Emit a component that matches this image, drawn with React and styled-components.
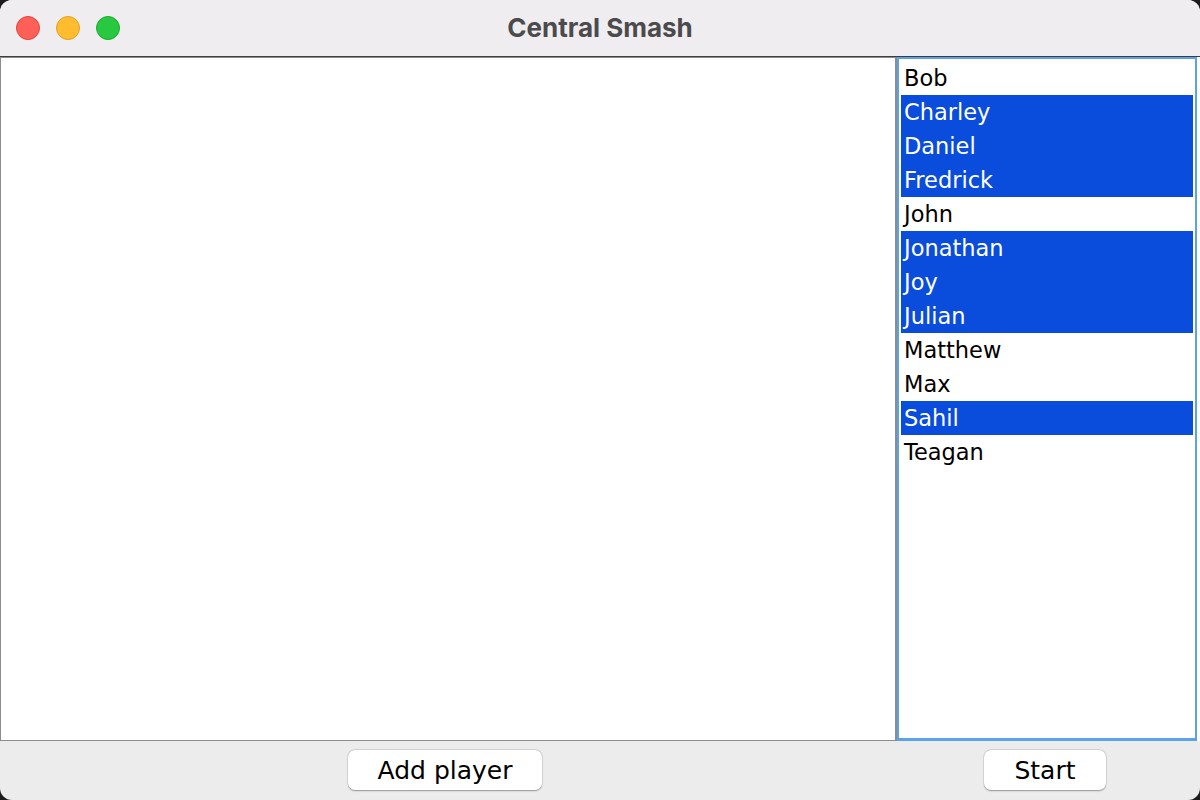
import React, { useState } from "react";
import styled, { createGlobalStyle } from "styled-components";

const GlobalStyle = createGlobalStyle`
	html, body {
		margin: 0;
		padding: 0;
		background: #1c1c1c;
	}
	#root {
		width: 1200px;
		height: 800px;
	}
`;

const Window = styled.div`
	width: 1200px;
	height: 800px;
	border-radius: 12px;
	overflow: hidden;
	background: #ececec;
	display: flex;
	flex-direction: column;
	font-family: "DejaVu Sans", "Liberation Sans", sans-serif;
`;

const TitleBar = styled.div`
	position: relative;
	height: 56px;
	flex: none;
	background: #efedf0;
	border-bottom: 1px solid #3d3d3d;
	display: flex;
	align-items: center;
	justify-content: center;

	h1 {
		margin: 0 0 2px 0;
		font-family: "Inter", "Liberation Sans", sans-serif;
		font-size: 26px;
		font-weight: 700;
		color: #4b4a4d;
	}
`;

const Lights = styled.div`
	position: absolute;
	left: 16px;
	top: 16px;
	display: flex;
	gap: 16px;
`;

const Light = styled.span`
	width: 24px;
	height: 24px;
	border-radius: 50%;
	background: ${p => p.color};
	border: 1px solid ${p => p.edge};
	box-sizing: border-box;
`;

const Main = styled.div`
	height: 684px;
	flex: none;
	display: grid;
	grid-template-columns: 897px 300px;
	background: #ffffff;
`;

const Canvas = styled.div`
	border: 1px solid #8c8c8c;
	border-right-width: 2px;
	background: #fff;
`;

const List = styled.ul`
	margin: 0;
	padding: 2px;
	list-style: none;
	border: 2px solid #5aa3e8;
	border-bottom-width: 3px;
	background: #fff;
	overflow: hidden;
`;

const Item = styled.li`
	height: 34px;
	line-height: 34px;
	padding-left: 3px;
	font-size: 22.5px;
	background: ${p => (p.selected ? "#0a4cdb" : "transparent")};
	color: ${p => (p.selected ? "#fff" : "#000")};
	white-space: nowrap;
`;

const BottomBar = styled.div`
	flex: 1;
	display: grid;
	grid-template-columns: 890px 310px;
	align-items: start;
	padding-top: 9px;
`;

const Button = styled.button`
	justify-self: center;
	height: 40px;
	padding: 0 30px;
	border: none;
	border-radius: 7px;
	background: #fff;
	box-shadow: 0 0.5px 1.5px rgba(0, 0, 0, 0.35), 0 0 0 0.5px rgba(0, 0, 0, 0.08);
	font-family: "DejaVu Sans", "Liberation Sans", sans-serif;
	font-size: 25px;
	color: #000;
	cursor: pointer;
`;

const players = [
	["Bob", false],
	["Charley", true],
	["Daniel", true],
	["Fredrick", true],
	["John", false],
	["Jonathan", true],
	["Joy", true],
	["Julian", true],
	["Matthew", false],
	["Max", false],
	["Sahil", true],
	["Teagan", false]
];

const App = () => {
	const [selected, setSelected] = useState(players.map(p => p[1]));

	const toggle = i => setSelected(selected.map((s, j) => (j === i ? !s : s)));

	return (
		<>
			<GlobalStyle />
			<Window>
				<TitleBar>
					<Lights>
						<Light color="#fe5f57" edge="#e0443e" />
						<Light color="#febc2e" edge="#dea123" />
						<Light color="#28c840" edge="#1aab29" />
					</Lights>
					<h1>Central Smash</h1>
				</TitleBar>

				<Main>
					<Canvas />
					<List>
						{players.map(([name], i) => (
							<Item key={name} selected={selected[i]} onClick={() => toggle(i)}>
								{name}
							</Item>
						))}
					</List>
				</Main>

				<BottomBar>
					<Button>Add player</Button>
					<Button>Start</Button>
				</BottomBar>
			</Window>
		</>
	);
};

export default App;
